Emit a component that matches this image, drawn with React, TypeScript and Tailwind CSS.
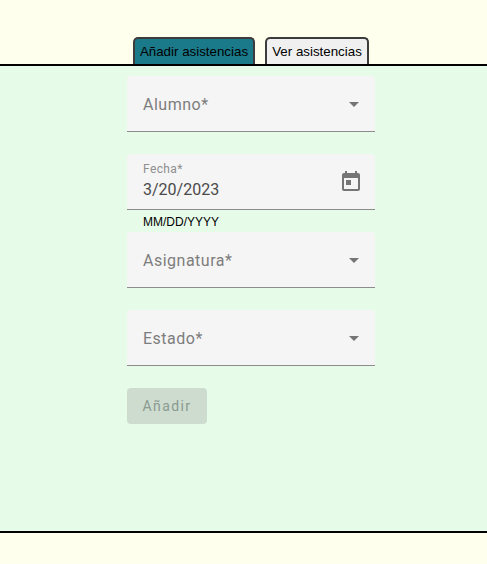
import React from "react"

const CaretIcon = () => (
  <svg className="absolute right-[9px] top-[16px] h-6 w-6 fill-[#757575]" viewBox="0 0 24 24">
    <path d="M7 10l5 5 5-5z" />
  </svg>
)

const CalendarIcon = () => (
  <svg className="absolute right-[12px] top-[16px] h-6 w-6 fill-[#757575]" viewBox="0 0 24 24">
    <path d="M19 3h-1V1h-2v2H8V1H6v2H5c-1.11 0-1.99.9-1.99 2L3 19c0 1.1.89 2 2 2h14c1.1 0 2-.9 2-2V5c0-1.1-.9-2-2-2zm0 16H5V8h14v11zM7 10h5v5H7z" />
  </svg>
)

const SelectField = ({ label, className }: { label: string; className?: string }) => (
  <div className={`relative h-14 w-[248px] rounded-t bg-[#f5f5f5] border-b border-[#8c8c8c] ${className ?? ""}`}>
    <span className="absolute left-4 top-[17px] font-['Roboto',sans-serif] text-base leading-6 tracking-[0.5px] text-[#7d7d7d]">
      {label}
    </span>
    <CaretIcon />
  </div>
)

export default function App() {
  return (
    <div className="flex h-[564px] w-[487px] flex-col bg-[#ffffee] font-['Liberation_Sans',sans-serif]">
      <div className="flex h-[64px] items-end pl-[133px]">
        <button className="mr-[10px] h-[27px] w-[122px] rounded-t-[5px] border-2 border-b-0 border-[#3c3c3c] bg-[#1a7a8a] text-[13.33px] text-black">
          Añadir asistencias
        </button>
        <button className="h-[27px] w-[104px] rounded-t-[5px] border-2 border-b-0 border-[#3c3c3c] bg-[#f0f0f0] text-[13.33px] text-black">
          Ver asistencias
        </button>
      </div>
      <main className="flex h-[469px] flex-col items-start border-y-2 border-black bg-[#e6fce9] pl-[127px] pt-[10px]">
        <SelectField label="Alumno*" />
        <div className="relative mt-[22px] h-14 w-[248px] rounded-t border-b border-[#8c8c8c] bg-[#f5f5f5] font-['Roboto',sans-serif]">
          <span className="absolute left-4 top-[7px] text-xs leading-4 tracking-[0.4px] text-[#8f8f8f]">Fecha*</span>
          <span className="absolute left-4 top-[24px] text-base leading-6 text-[#4a4a4a]">3/20/2023</span>
          <CalendarIcon />
        </div>
        <p className="pl-4 pt-[5px] h-[22px] text-xs leading-[14px] text-black">MM/DD/YYYY</p>
        <SelectField label="Asignatura*" />
        <SelectField label="Estado*" className="mt-[22px]" />
        <button className="mt-[22px] h-9 w-20 rounded bg-[#cddccf] font-['Roboto',sans-serif] text-sm tracking-[1.4px] text-[#8a9a90]">
          Añadir
        </button>
      </main>
    </div>
  )
}
